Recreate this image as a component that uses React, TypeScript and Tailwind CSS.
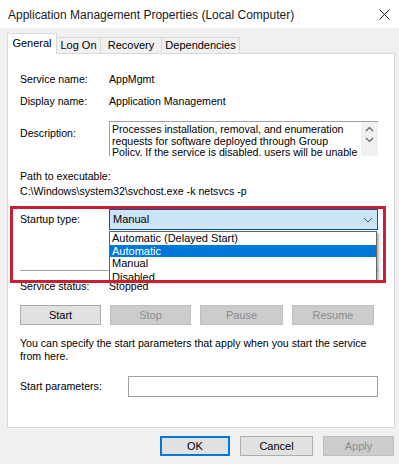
import React from 'react';

const font = { fontFamily: '"Liberation Sans", Arial, sans-serif' };

const tabs = [
  { label: 'General', w: 'w-[50px]', active: true },
  { label: 'Log On', w: 'w-[44px]' },
  { label: 'Recovery', w: 'w-[61px]' },
  { label: 'Dependencies', w: 'w-[78px]' },
];

function Btn({ label, disabled, w, focus }: { label: string; disabled?: boolean; w: string; focus?: boolean }) {
  return (
    <div
      className={`${w} h-[20px] flex items-center justify-center text-[11px] ${
        disabled
          ? 'bg-[#cccccc] border border-[#bfbfbf] text-[#8c8c8c]'
          : focus
            ? 'bg-[#e1e1e1] border-2 border-[#0078d7] text-black'
            : 'bg-[#e1e1e1] border border-[#adadad] text-black'
      }`}
    >
      {label}
    </div>
  );
}

export default function App() {
  return (
    <div className="w-[399px] h-[464px] bg-[#f0f0f0] overflow-hidden text-[10.6px] text-black relative" style={font}>
      {/* Title bar */}
      <div className="h-[28px] bg-white flex items-center justify-between pl-[8px] pr-[8px]">
        <span className="text-[12px] text-[#1a1a1a] mt-[1px]">Application Management Properties (Local Computer)</span>
        <svg width="11" height="11" viewBox="0 0 11 11" className="mr-[1px]">
          <path d="M0.5 0.5 L10.5 10.5 M10.5 0.5 L0.5 10.5" stroke="#222" strokeWidth="1" />
        </svg>
      </div>

      {/* Tabs */}
      <div className="mt-[5px] ml-[7px] h-[20px] flex items-start relative z-10 text-[11px]">
        {tabs.map((t) =>
          t.active ? (
            <div key={t.label} className={`${t.w} h-[21px] bg-white border border-b-0 border-[#d9d9d9] flex items-center justify-center pb-[1px]`}>
              {t.label}
            </div>
          ) : (
            <div key={t.label} className={`${t.w} h-[16px] mt-[4px] bg-[#f0f0f0] border border-l-0 border-b-0 border-[#d9d9d9] flex items-center justify-center`}>
              {t.label}
            </div>
          )
        )}
      </div>

      {/* Panel */}
      <div className="ml-[7px] w-[388px] h-[375px] bg-white border border-[#d9d9d9] pl-[12px] pr-[16px] flex flex-col">
        <div className="mt-[18px] h-[14px] leading-[14px] flex">
          <span className="w-[89px]">Service name:</span>
          <span>AppMgmt</span>
        </div>
        <div className="mt-[8px] h-[14px] leading-[14px] flex">
          <span className="w-[89px]">Display name:</span>
          <span>Application Management</span>
        </div>
        <div className="mt-[13px] flex">
          <span className="w-[89px] mt-[5px] leading-[14px]">Description:</span>
          <div className="flex-1 h-[35px] border-t border-l border-[#a0a0a0] flex overflow-hidden">
            <div className="flex-1 pl-[2px] pt-[2px] leading-[11.5px] overflow-hidden">
              Processes installation, removal, and enumeration requests for software deployed through Group Policy. If the service is disabled, users will be unable to install, remove, or enumerate software.
            </div>
            <div className="w-[17px] bg-[#f0f0f0] flex flex-col items-center pt-[4px] gap-[5px]">
              <svg width="9" height="6" viewBox="0 0 9 6"><path d="M1 5 L4.5 1.5 L8 5" stroke="#606060" strokeWidth="1.2" fill="none" /></svg>
              <svg width="9" height="6" viewBox="0 0 9 6"><path d="M1 1 L4.5 4.5 L8 1" stroke="#606060" strokeWidth="1.2" fill="none" /></svg>
            </div>
          </div>
        </div>
        <div className="mt-[13px] h-[14px] leading-[14px]">Path to executable:</div>
        <div className="mt-[1px] h-[14px] leading-[14px]">C:\Windows\system32\svchost.exe -k netsvcs -p</div>
        <div className="mt-[11px] h-[21px] flex items-center">
          <span className="w-[89px]">Startup type:</span>
          <div className="flex-1 h-[21px] bg-[#cce4f7] border border-[#005499] flex items-center justify-between pl-[3px] pr-[4px] text-[11px]">
            <span>Manual</span>
            <svg width="10" height="6" viewBox="0 0 10 6"><path d="M1 1 L5 5 L9 1" stroke="#505050" strokeWidth="1" fill="none" /></svg>
          </div>
        </div>
        <div className="mt-[40px] h-px bg-[#a0a0a0]" />
        <div className="mt-[8px] h-[14px] leading-[14px] flex">
          <span className="w-[89px]">Service status:</span>
          <span>Stopped</span>
        </div>
        <div className="mt-[12px] flex gap-[9px]">
          <Btn label="Start" w="w-[81px]" />
          <Btn label="Stop" w="w-[81px]" disabled />
          <Btn label="Pause" w="w-[83px]" disabled />
          <Btn label="Resume" w="w-[82px]" disabled />
        </div>
        <div className="mt-[12px] leading-[13px]">
          You can specify the start parameters that apply when you start the service from here.
        </div>
        <div className="mt-[13px] h-[21px] flex items-center">
          <span className="w-[108px]">Start parameters:</span>
          <div className="flex-1 h-[21px] border border-[#a0a0a0] bg-white" />
        </div>
      </div>

      {/* Dialog buttons */}
      <div className="mt-[8px] flex justify-end gap-[10px] pr-[5px]">
        <Btn label="OK" w="w-[70px]" focus />
        <Btn label="Cancel" w="w-[73px]" />
        <Btn label="Apply" w="w-[71px]" disabled />
      </div>

      {/* Open combo list */}
      <div className="absolute left-[109px] top-[231px] w-[268px] h-[50px] bg-white border border-[#646464] shadow-[2px_2px_2px_rgba(0,0,0,0.3)] overflow-hidden text-[11px]">
        <div className="h-[12.5px] leading-[12.5px] pl-[2px]">Automatic (Delayed Start)</div>
        <div className="h-[12.5px] leading-[12.5px] pl-[2px] bg-[#0078d7] text-white">Automatic</div>
        <div className="h-[12.5px] leading-[12.5px] pl-[2px]">Manual</div>
        <div className="h-[12.5px] leading-[14px] pl-[2px]">Disabled</div>
      </div>

      {/* Red highlight */}
      <div className="absolute left-[10px] top-[206px] w-[376px] h-[77px] border-[3px] border-[#c8202f]" />
    </div>
  );
}
